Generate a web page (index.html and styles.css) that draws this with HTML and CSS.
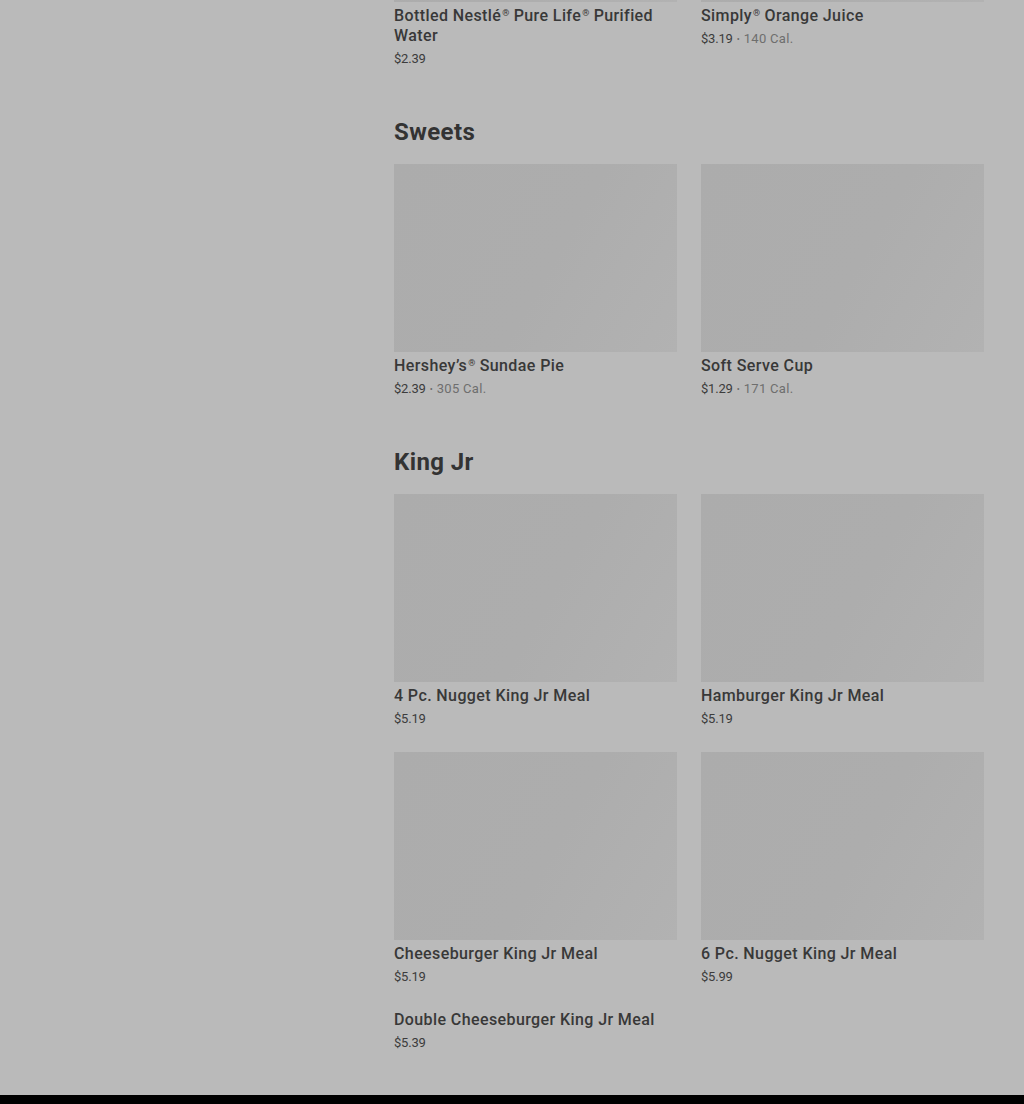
FILE: index.html
```html
<!DOCTYPE html>
<html lang="en">
<head>
  <meta charset="UTF-8" />
  <meta name="viewport" content="width=device-width, initial-scale=1.0" />
  <title>Menu</title>
  <link rel="stylesheet" href="styles.css">
</head>
<body>
  <div class="layout">
    <aside class="sidebar"></aside>
    <main class="menu">
      <section class="section">
        <div class="grid">
          <div class="item">
            <div class="thumb"></div>
            <div class="name">Bottled Nestlé<span class="reg">®</span> Pure Life<span class="reg">®</span> Purified Water</div>
            <div class="meta"><span class="price">$2.39</span></div>
          </div>
          <div class="item">
            <div class="thumb"></div>
            <div class="name">Simply<span class="reg">®</span> Orange Juice</div>
            <div class="meta"><span class="price">$3.19</span><span class="dot">•</span><span class="cal">140 Cal.</span></div>
          </div>
        </div>
      </section>

      <section class="section">
        <h2 class="title">Sweets</h2>
        <div class="grid">
          <div class="item">
            <div class="thumb"></div>
            <div class="name">Hershey’s<span class="reg">®</span> Sundae Pie</div>
            <div class="meta"><span class="price">$2.39</span><span class="dot">•</span><span class="cal">305 Cal.</span></div>
          </div>
          <div class="item">
            <div class="thumb"></div>
            <div class="name">Soft Serve Cup</div>
            <div class="meta"><span class="price">$1.29</span><span class="dot">•</span><span class="cal">171 Cal.</span></div>
          </div>
        </div>
      </section>

      <section class="section">
        <h2 class="title">King Jr</h2>
        <div class="grid">
          <div class="item">
            <div class="thumb"></div>
            <div class="name">4 Pc. Nugget King Jr Meal</div>
            <div class="meta"><span class="price">$5.19</span></div>
          </div>
          <div class="item">
            <div class="thumb"></div>
            <div class="name">Hamburger King Jr Meal</div>
            <div class="meta"><span class="price">$5.19</span></div>
          </div>
          <div class="item">
            <div class="thumb"></div>
            <div class="name">Cheeseburger King Jr Meal</div>
            <div class="meta"><span class="price">$5.19</span></div>
          </div>
          <div class="item">
            <div class="thumb"></div>
            <div class="name">6 Pc. Nugget King Jr Meal</div>
            <div class="meta"><span class="price">$5.99</span></div>
          </div>
          <div class="item">
            <div class="name">Double Cheeseburger King Jr Meal</div>
            <div class="meta"><span class="price">$5.39</span></div>
          </div>
        </div>
      </section>
    </main>
  </div>
  <footer class="footer"></footer>
</body>
</html>
```

FILE: styles.css
```css
body {
  margin: 0;
  background-color: #bababa;
  font-family: Roboto, "Liberation Sans", Arial, sans-serif;
  color: #333;
  overflow: hidden;
}
.layout {
  display: flex;
}
.sidebar {
  width: 394px;
  flex-shrink: 0;
}
.menu {
  width: 590px;
  margin-top: -186px;
  padding-bottom: 43px;
}
.section + .section {
  margin-top: 47px;
}
.title {
  margin: 0 0 16px;
  padding-top: 2px;
  font-size: 24px;
  line-height: 31px;
  font-weight: 700;
  color: #333;
  letter-spacing: 0.4px;
}
.grid {
  display: grid;
  grid-template-columns: 283px 283px;
  column-gap: 24px;
  row-gap: 24px;
}
.thumb {
  height: 188px;
  background: linear-gradient(120deg, #acacac 0%, #adadad 55%, #b2b2b2 100%);
}
.name {
  margin-top: 4px;
  font-size: 16px;
  line-height: 20px;
  font-weight: 500;
  color: #383838;
  letter-spacing: 0.4px;
}
.item:not(:has(.thumb)) .name {
  margin-top: 0;
}
.reg {
  display: inline-block;
  vertical-align: top;
  font-size: 9px;
  line-height: 12px;
  margin: 1px 0 0 1px;
  letter-spacing: 0;
}
.meta {
  margin-top: 4px;
  font-size: 13px;
  line-height: 18px;
  display: flex;
  align-items: center;
}
.price {
  color: #3c3c3c;
  letter-spacing: -0.2px;
}
.dot {
  color: #6a6a6a;
  font-size: 9px;
  margin: 0 4px;
}
.cal {
  color: #6e6e6e;
  letter-spacing: 0.3px;
}
.footer {
  height: 200px;
  background: #000;
}
```
